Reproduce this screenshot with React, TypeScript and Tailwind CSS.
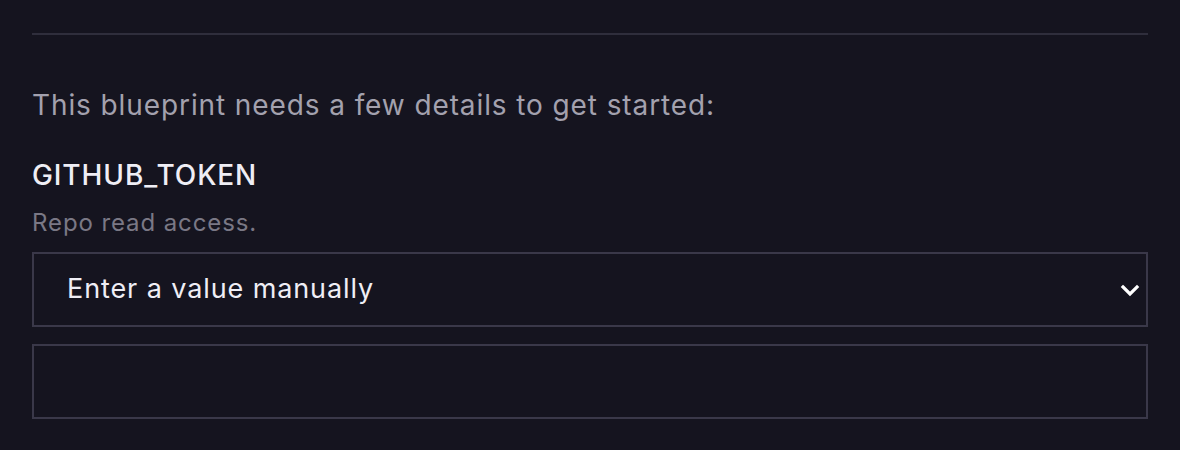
import React from "react";

const App = () => {
  return (
    <div
      className="min-h-[450px] w-full bg-[#15141f] px-8"
      style={{ fontFamily: "Inter, 'Noto Sans', sans-serif" }}
    >
      <div className="h-[35px] border-b-2 border-[#2f2e3c]" />
      <p className="mt-[52px] text-[28px] leading-[36px] tracking-[0.9px] text-[#a3a1ae]">
        This blueprint needs a few details to get started:
      </p>
      <div className="mt-[34px] flex flex-col">
        <label className="text-[28px] font-medium leading-[36px] tracking-[0.9px] text-[#efeef5]">
          GITHUB_TOKEN
        </label>
        <span className="mt-[16px] text-[24px] leading-[28px] tracking-[0.9px] text-[#7a7885]">
          Repo read access.
        </span>
        <div className="relative mt-[15px]">
          <select className="h-[75px] w-full appearance-none border-2 border-[#3a3849] bg-[#15141f] pl-[33px] text-[27px] tracking-[0.9px] text-[#efeef5] outline-none">
            <option>Enter a value manually</option>
          </select>
          <svg
            className="pointer-events-none absolute right-[7px] top-1/2 -translate-y-1/2"
            width="22"
            height="22"
            viewBox="0 0 22 22"
            fill="none"
          >
            <path
              d="M4 8l7 7 7-7"
              stroke="#ffffff"
              strokeWidth="3.2"
              strokeLinecap="square"
            />
          </svg>
        </div>
        <input
          type="text"
          className="mt-[17px] h-[75px] w-full border-2 border-[#3a3849] bg-[#15141f] px-[33px] text-[27px] text-[#efeef5] outline-none"
        />
      </div>
    </div>
  );
};

export default App;
